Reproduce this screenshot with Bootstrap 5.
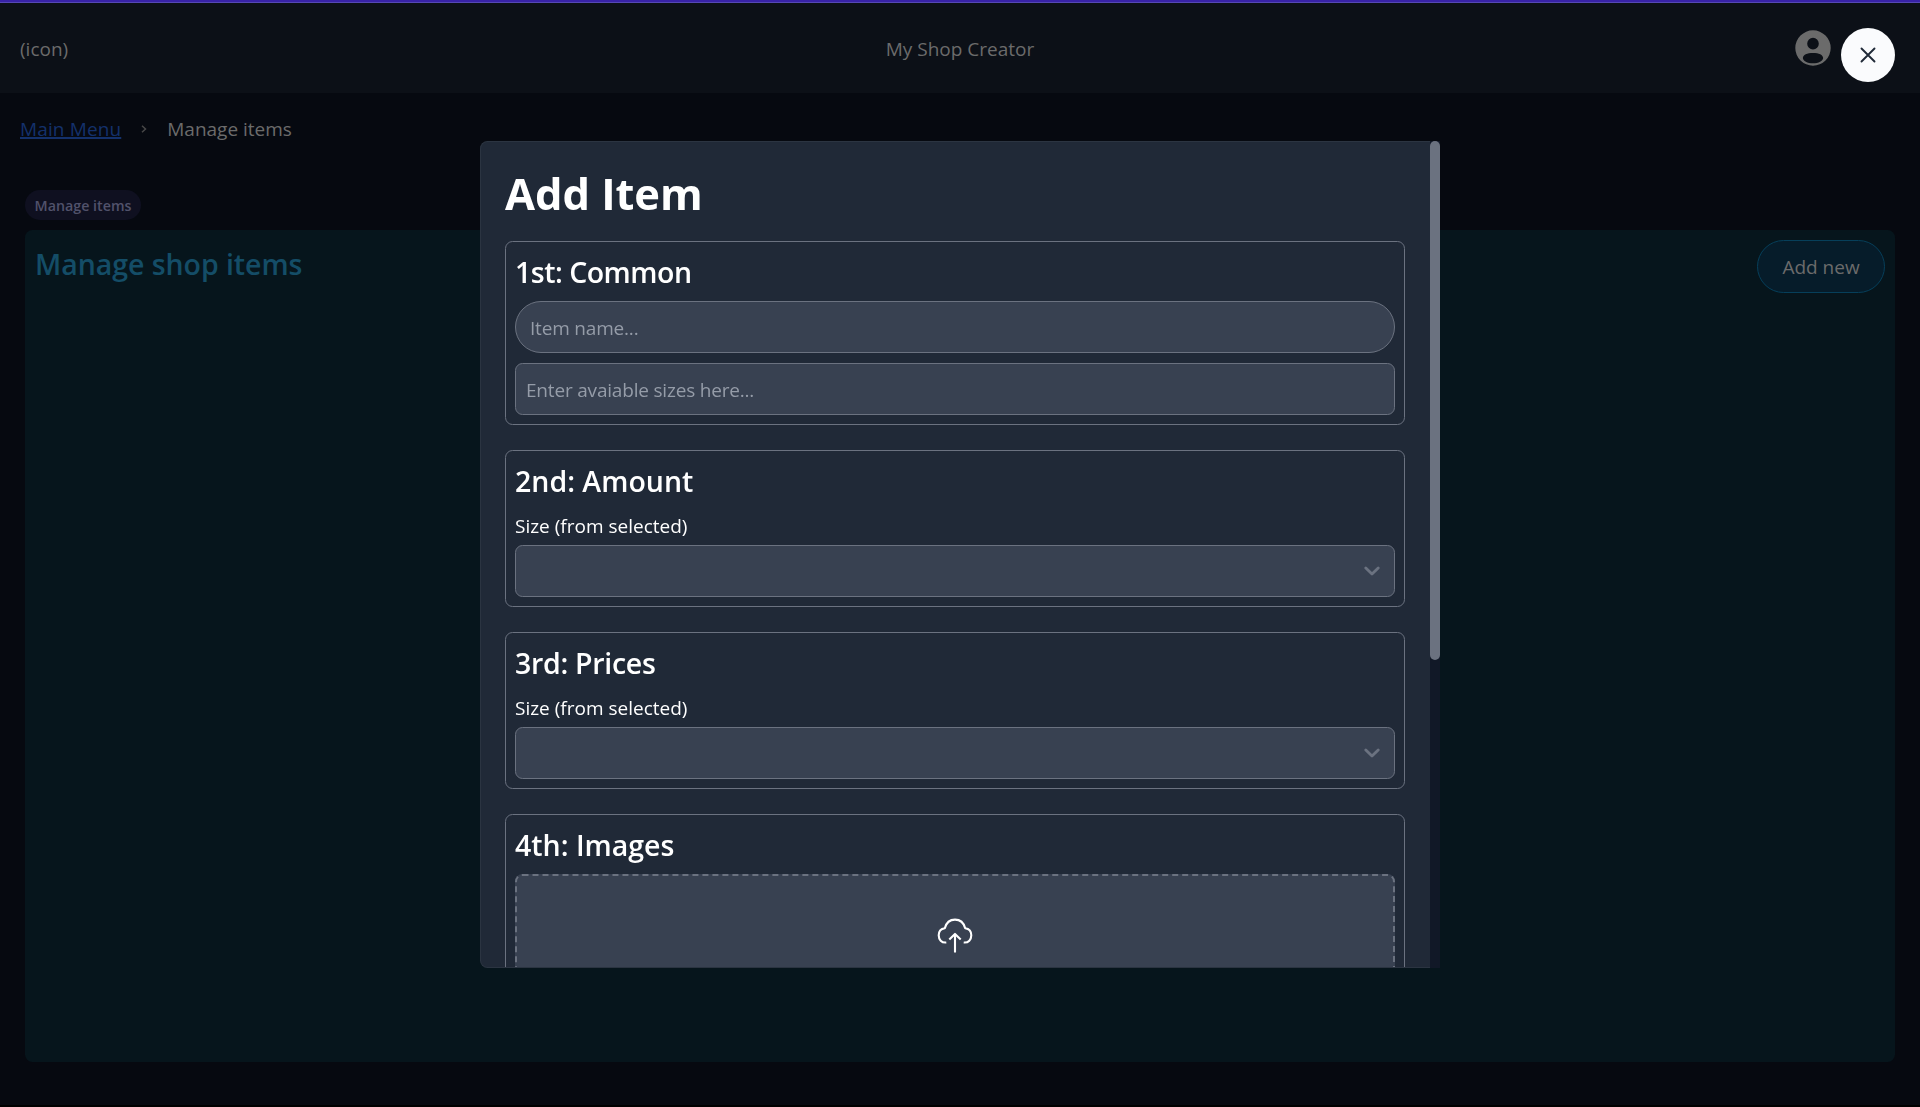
<!DOCTYPE html>
<html lang="en">
<head>
<meta charset="utf-8">
<meta name="viewport" content="width=device-width, initial-scale=1">
<title>My Shop Creator</title>
<link rel="stylesheet" href="https://cdn.jsdelivr.net/npm/bootstrap@5.3.0/dist/css/bootstrap.min.css">
<style>
html,body{height:100%}
body{font-family:"Open Sans","Noto Sans",sans-serif;font-size:19px;line-height:30px;background:#060910;color:#6b6b6b;overflow:hidden}
.app{height:1105px}
.app-end{height:2px;background:#000}
.progress-line{height:3px;background:#3822a6;border-bottom:1px solid #5648b4}
.app-bar{height:90px;background:#0c1017;padding:0 20px;display:grid;grid-template-columns:1fr auto 1fr}
.app-bar span{padding-top:2px}
.avatar{margin-right:69px}
.crumbs{padding:0 20px;margin-top:21px;height:30px;gap:20px}
.crumbs a{color:#14316b;text-decoration:underline;text-decoration-thickness:2px;text-underline-offset:1px;letter-spacing:.13px}
.workspace{padding:0 25px}
.tab-chip{margin-top:46px;height:30px;width:116px;padding-top:2px;font-size:14.25px;font-weight:600;background:#0f1020;color:#51526b}
.panel{margin-top:10px;height:832px;background:#06151c;border-radius:7.5px;padding:10px}
.panel h2{font-size:28.5px;line-height:40px;font-weight:600;color:#144d67;margin:4px 0 0;letter-spacing:-.05px}
.btn-add{width:128px;height:53px;border:1px solid #063f5a;background:#061c2a;color:#6b6b6b;font-size:19px;padding:0;line-height:30px}
.overlay{position:fixed;inset:0;z-index:10}
.dialog-box{width:960px;height:827px;margin-top:141px}
.dialog-main{width:950px;background:#202937;border:1px solid #2b3441;border-right:0;border-radius:7.5px 0 0 7.5px;overflow:hidden;padding:24px 25px 0 24px;color:#fff}
.dialog-main h1{font-size:43.5px;line-height:50px;font-weight:700;margin:3px 0 22px;letter-spacing:-.05px}
.rail{width:10px;background:#111827}
.thumb{height:519px;background:#6b7280;border-radius:5px}
.group{border:1px solid #6b7280;border-radius:7.5px;padding:9px;margin-bottom:25px}
.group h2{font-size:28.5px;line-height:40px;font-weight:600;margin:0 0 9px;padding-top:1px}
.group .snug{letter-spacing:-.5px}
.group .snug-sm{letter-spacing:-.3px}
.field{height:52px;background:#384151;border:1px solid #6b7280;border-radius:7.5px;font-size:19px;color:#fff;padding:2px 10px 0;letter-spacing:-.19px}
.field + .field{margin-top:10px}
.field:focus{background:#384151}
.field::placeholder{color:#959ca8;opacity:1}
.field-pill{border-radius:26px;padding:2px 14px 0}
.size-label{display:block;padding-top:1px;margin-bottom:4px}
.pick{padding:0 14px}
.drop{height:170px;border:2px dashed #6b7280;border-radius:7.5px;background:#384151;padding-top:40px}
.btn-x{position:absolute;left:1841px;top:28px;width:54px;height:54px;background:#fafbfd;border:0;padding:0}
</style>
<script src="https://cdn.jsdelivr.net/npm/bootstrap@5.3.0/dist/js/bootstrap.bundle.min.js"></script>
</head>
<body>
<div class="app">
  <div class="progress-line"></div>
  <header class="app-bar align-items-center">
    <span>(icon)</span>
    <span>My Shop Creator</span>
    <svg class="avatar ms-auto" width="36" height="36" viewBox="-.3 -.3 36.600 36.600"><path fill="#6b6b6b" fill-rule="evenodd" d="M18 0a18 18 0 1 1 0 36a18 18 0 0 1 0-36M18 7.700a5.900 5.900 0 1 0 0 11.800a5.900 5.900 0 0 0 0-11.800M18 23C12 23 7.700 24.800 7.700 28.200C7.700 31.300 12.500 33.600 18 33.600S28.300 31.300 28.300 28.200C28.300 24.800 24 23 18 23"/></svg>
  </header>
  <nav class="crumbs d-flex align-items-center">
    <a href="#">Main Menu</a>
    <svg width="6" height="8" viewBox="0 0 6 8" fill="none" stroke="#484848" stroke-width="1.500"><path d="M1 .8L4.500 4L1 7.200"/></svg>
    <span>Manage items</span>
  </nav>
  <main class="workspace">
    <div class="tab-chip rounded-pill d-flex align-items-center justify-content-center">Manage items</div>
    <section class="panel">
      <div class="d-flex justify-content-between align-items-start">
        <h2>Manage shop items</h2>
        <button class="btn btn-add rounded-pill" type="button">Add new</button>
      </div>
    </section>
  </main>
</div>
<div class="app-end"></div>

<div class="overlay">
  <div class="dialog-box d-flex mx-auto">
    <div class="dialog-main">
      <h1>Add Item</h1>
      <section class="group">
        <h2 class="snug">1st: Common</h2>
        <input class="form-control field field-pill" type="text" placeholder="Item name...">
        <input class="form-control field" type="text" placeholder="Enter avaiable sizes here...">
      </section>
      <section class="group">
        <h2>2nd: Amount</h2>
        <span class="size-label">Size (from selected)</span>
        <div class="field pick d-flex align-items-center justify-content-end">
          <svg width="16" height="11" viewBox="0 0 16 11" fill="none" stroke="#6b7280" stroke-width="2.800" stroke-linecap="round" stroke-linejoin="round"><path d="M1.800 2L8 8L14.200 2"/></svg>
        </div>
      </section>
      <section class="group">
        <h2 class="snug-sm">3rd: Prices</h2>
        <span class="size-label">Size (from selected)</span>
        <div class="field pick d-flex align-items-center justify-content-end">
          <svg width="16" height="11" viewBox="0 0 16 11" fill="none" stroke="#6b7280" stroke-width="2.800" stroke-linecap="round" stroke-linejoin="round"><path d="M1.800 2L8 8L14.200 2"/></svg>
        </div>
      </section>
      <section class="group">
        <h2>4th: Images</h2>
        <div class="drop d-flex justify-content-center align-items-start">
          <svg width="38" height="38" viewBox="0 0 38 38" fill="none" stroke="#fff" stroke-width="2.100" stroke-linejoin="round"><path d="M10.300 26.500C5.500 27 2.700 23.500 2.700 19.300C2.700 15.500 5 12.700 8.800 12.200C10.200 7 14 3.600 19 3.600S27.800 7 29.200 12.200C33 12.700 35.300 15.500 35.300 19.300C35.300 23.500 32.500 27 27.700 26.500M19 36.500V18M13.300 23.600L19 17.900L24.700 23.600"/></svg>
        </div>
      </section>
    </div>
    <div class="rail"><div class="thumb"></div></div>
  </div>
  <button class="btn btn-x rounded-circle d-flex align-items-center justify-content-center" type="button" aria-label="Close">
    <svg width="16" height="16" viewBox="0 0 16 16" stroke="#1f2937" stroke-width="1.900" stroke-linecap="round"><path d="M1.500 1.500L14.500 14.500M14.500 1.500L1.500 14.500"/></svg>
  </button>
</div>
</body>
</html>
